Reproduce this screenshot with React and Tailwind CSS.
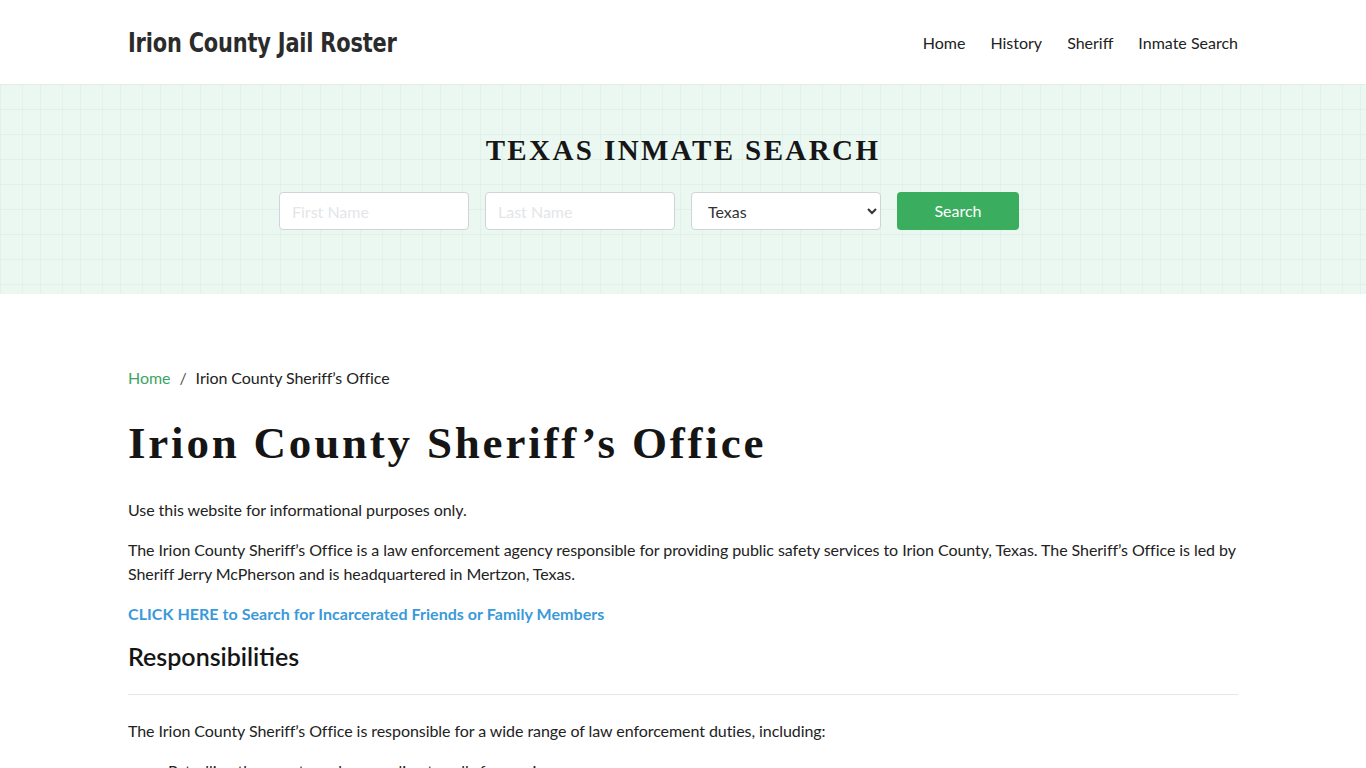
import React from 'react';

// Site header, inmate search banner and the sheriff's office article
const navLinks = ['Home', 'History', 'Sheriff', 'Inmate Search'];

const Header = () => (
  <header className="h-[84px] bg-white">
    <div className="mx-auto w-[1110px] h-full flex items-center justify-between">
      <a
        href="#"
        className="pt-[2px] origin-left scale-x-[0.86] whitespace-nowrap text-[#2b2b2b] text-[27px] font-bold [font-stretch:condensed] tracking-[-0.2px] [font-family:'DejaVu_Sans_Condensed','DejaVu_Sans',sans-serif]"
      >
        Irion County Jail Roster
      </a>
      <nav className="pt-[2px] flex items-center gap-[25px] text-[16px] text-[#222]">
        {navLinks.map((link) => (
          <a key={link} href="#" className="hover:text-[#3bac5e]">
            {link}
          </a>
        ))}
      </nav>
    </div>
  </header>
);

const SearchBanner = () => (
  <section className="h-[210px] bg-[#ebf8f1] bg-[linear-gradient(90deg,rgba(205,228,216,0.3)_1px,transparent_1px),linear-gradient(90deg,transparent_22px,rgba(205,228,216,0.25)_22px,rgba(205,228,216,0.25)_23px,transparent_23px),linear-gradient(180deg,rgba(205,228,216,0.35)_1px,transparent_1px)] bg-[size:40px_25px]">
    <div className="pt-[48px] flex flex-col items-center">
      <h2 className="text-[#161616] text-[29px] font-bold tracking-[2.4px] leading-[36px] [font-family:'Liberation_Serif',serif]">
        TEXAS INMATE SEARCH
      </h2>
      <form className="mt-[24px] grid grid-cols-[190px_190px_190px_190px] gap-[16px]">
        <input
          type="text"
          placeholder="First Name"
          className="h-[38px] px-3 rounded-[4px] border border-[#ced4da] bg-white text-[16px] placeholder:text-[#e3e6e8] outline-none"
        />
        <input
          type="text"
          placeholder="Last Name"
          className="h-[38px] px-3 rounded-[4px] border border-[#ced4da] bg-white text-[16px] placeholder:text-[#e3e6e8] outline-none"
        />
        <select
          defaultValue="Texas"
          className="h-[38px] pl-[12px] pr-1 rounded-[4px] border border-[#ced4da] bg-white text-[16px] text-[#333] outline-none"
        >
          <option>Texas</option>
        </select>
        <button
          type="button"
          className="w-[122px] h-[38px] rounded-[4px] bg-[#3bad5f] text-white text-[16px]"
        >
          Search
        </button>
      </form>
    </div>
  </section>
);

const Article = () => (
  <main className="mx-auto w-[1110px] pt-[72px] text-[16px] leading-[24px] tracking-[-0.06px] text-[#222]">
    <nav className="flex items-center text-[16px]">
      <a href="#" className="text-[#3ca564]">Home</a>
      <span className="px-[9px] text-[#555]">/</span>
      <span>Irion County Sheriff’s Office</span>
    </nav>
    <h1 className="mt-[25px] text-[#151515] text-[45px] leading-[56px] font-bold tracking-[2.8px] [font-family:'Liberation_Serif',serif]">
      Irion County Sheriff’s Office
    </h1>
    <p className="mt-[27px]">Use this website for informational purposes only.</p>
    <p className="mt-[16px]">
      The Irion County Sheriff’s Office is a law enforcement agency responsible for providing public safety services to Irion County, Texas. The Sheriff’s Office is led by Sheriff Jerry McPherson and is headquartered in Mertzon, Texas.
    </p>
    <p className="mt-[16px]">
      <a href="#" className="font-bold tracking-[0.05px] text-[#3a9ad9]">
        CLICK HERE to Search for Incarcerated Friends or Family Members
      </a>
    </p>
    <h2 className="mt-[12px] text-[25px] leading-[36px] font-semibold tracking-normal text-[#151515]">
      Responsibilities
    </h2>
    <hr className="mt-[20px] border-t border-[#e6e6e6]" />
    <p className="mt-[24px]">
      The Irion County Sheriff’s Office is responsible for a wide range of law enforcement duties, including:
    </p>
    <ul className="mt-[16px] pl-[40px] list-disc">
      <li>Patrolling the county and responding to calls for service</li>
      <li>Investigating crimes and making arrests</li>
      <li>Operating the county jail</li>
    </ul>
  </main>
);

export default function App() {
  return (
    <div className="min-h-screen bg-white [font-family:Lato,'Open_Sans',sans-serif]">
      <Header />
      <SearchBanner />
      <Article />
    </div>
  );
}
